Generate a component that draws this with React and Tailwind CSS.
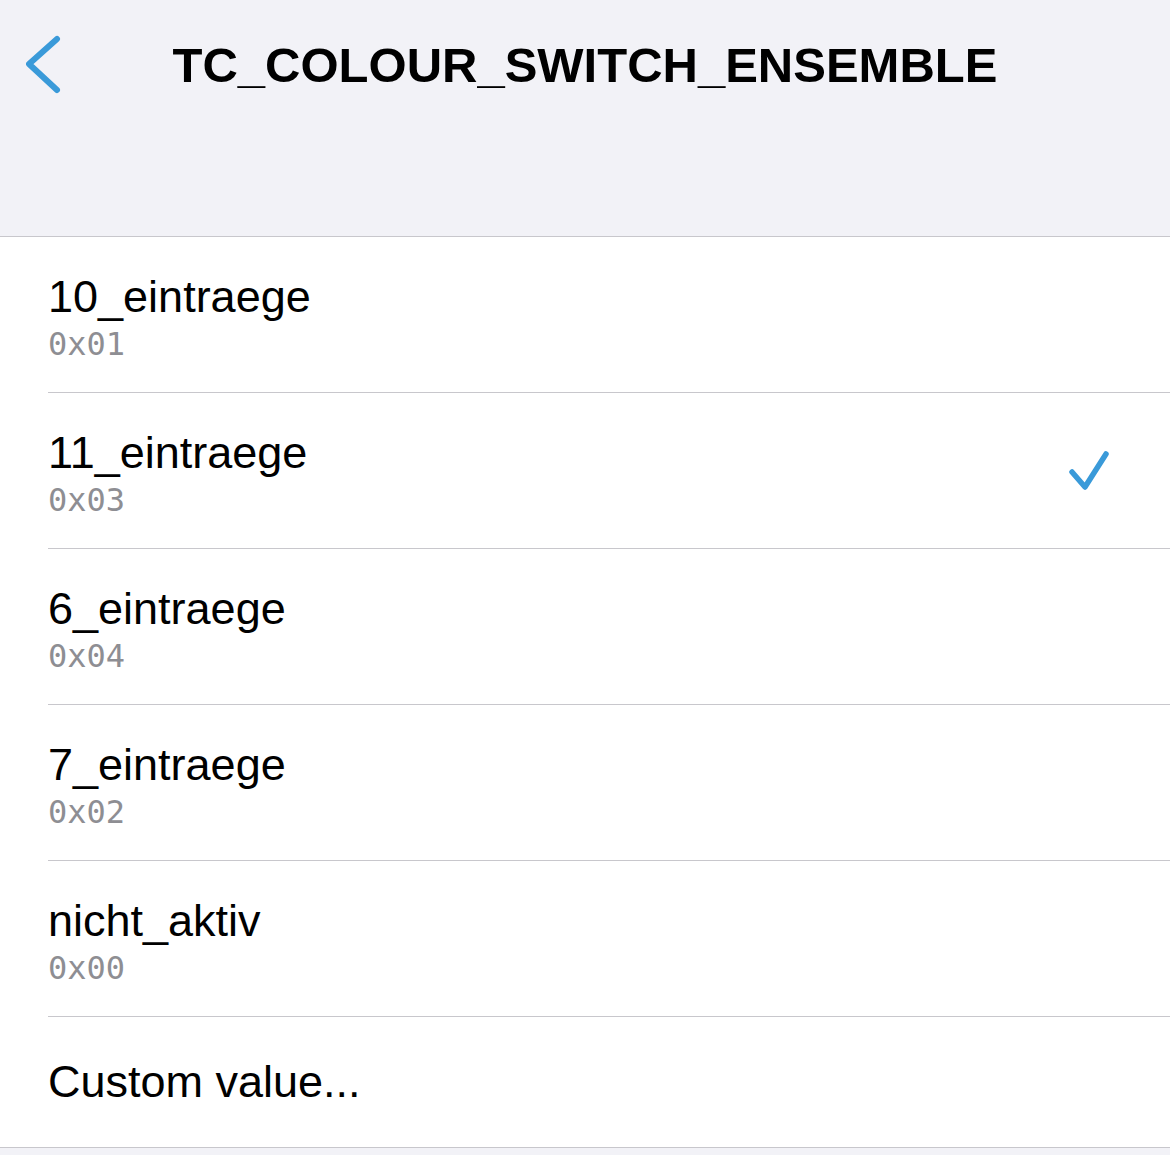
import React from 'react';

const OPTIONS = [
  { label: '10_eintraege', value: '0x01' },
  { label: '11_eintraege', value: '0x03', selected: true },
  { label: '6_eintraege', value: '0x04' },
  { label: '7_eintraege', value: '0x02' },
  { label: 'nicht_aktiv', value: '0x00' },
];

const sans = { fontFamily: '"Liberation Sans", Arial, sans-serif' };

function Chevron() {
  return (
    <svg width="40" height="64" viewBox="0 0 40 64" fill="none">
      <path d="M31 5 L3 30 L31 56" stroke="#3a9ad9" strokeWidth="6" strokeLinecap="round" strokeLinejoin="round" />
    </svg>
  );
}

function Check() {
  return (
    <svg width="44" height="44" viewBox="0 0 44 44" fill="none">
      <path d="M6 25 L19 40 L40 7" stroke="#3a9ad9" strokeWidth="5.5" strokeLinecap="round" strokeLinejoin="round" />
    </svg>
  );
}

function OptionRow({ label, value, selected }) {
  return (
    <div className="pl-[48px] bg-white">
      <div className="h-[156px] border-b border-[#c8c7cc] flex items-start justify-between">
        <div className="pt-[33px]">
          <div className="text-[45px] leading-[54px] text-black" style={sans}>{label}</div>
          <div className="text-[32px] leading-[38px] text-[#8e8e93] mt-[1px] font-['DejaVu_Sans_Mono',monospace]">{value}</div>
        </div>
        {selected && (
          <div className="self-center mr-[60px] mt-[-4px]">
            <Check />
          </div>
        )}
      </div>
    </div>
  );
}

export default function App() {
  return (
    <div className="w-[1170px] h-[1155px] bg-[#f2f2f7] overflow-hidden">
      <div className="h-[237px] border-b border-[#c8c7cc]">
        <div className="h-[132px] grid grid-cols-[1fr_auto_1fr] items-center">
          <div className="pl-[26px] flex items-center">
            <Chevron />
          </div>
          <div className="text-[49px] font-bold text-black" style={sans}>TC_COLOUR_SWITCH_ENSEMBLE</div>
          <div />
        </div>
      </div>
      {OPTIONS.map((o) => (
        <OptionRow key={o.label} {...o} />
      ))}
      <div className="bg-white h-[131px] border-b border-[#c8c7cc] pl-[48px] flex items-center">
        <div className="text-[45px] leading-[54px] text-black" style={sans}>Custom value...</div>
      </div>
    </div>
  );
}
